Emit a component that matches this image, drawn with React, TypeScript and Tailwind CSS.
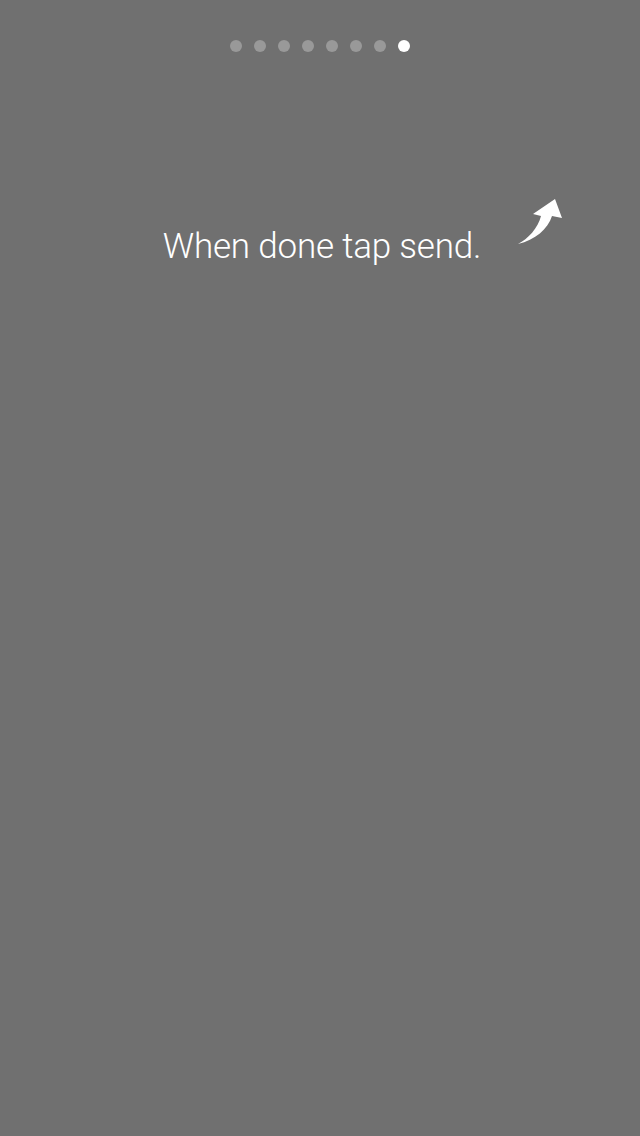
const DOTS = 8;

const Arrow = () => (
    <svg width="56" height="54" viewBox="0 0 56 54" className="absolute left-[510px] top-[195px]">
        <path d="M8 49 C18 44 28 33 31 21 L23 19 L45 4 L52 23 L42 21 C38 34 25 45 8 49 Z" fill="#fff" />
    </svg>
);

export default function App() {
    return (
        <div className="relative w-[640px] h-[1136px] bg-[#707070] overflow-hidden" style={{ fontFamily: '"Helvetica Neue", Roboto, "Liberation Sans", sans-serif' }}>
            <div className="flex justify-center gap-3 pt-[40px]">
                {Array.from({ length: DOTS }).map((_, i) => (
                    <span key={i} className={i === DOTS - 1 ? "w-3 h-3 rounded-full bg-white" : "w-3 h-3 rounded-full bg-[#999999]"} />
                ))}
            </div>
            <p className="mt-[175px] pl-[4px] text-center text-white text-[35px] font-light leading-[40px] tracking-[-0.2px]">
                When done tap send.
            </p>
            <Arrow />
        </div>
    );
}
